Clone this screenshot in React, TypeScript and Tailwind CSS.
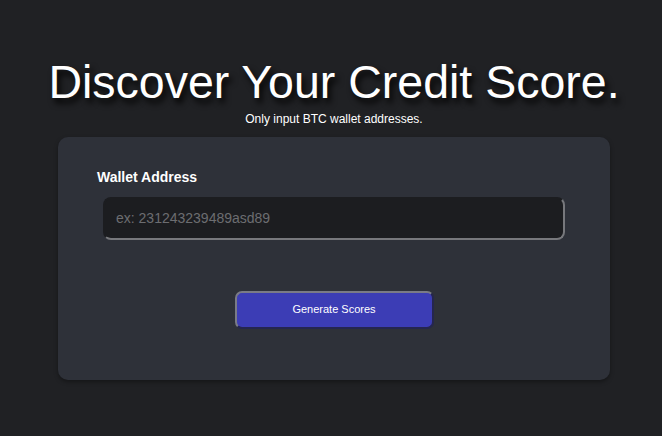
export default function App() {
  return (
    <div className="min-h-[436px] w-full bg-[#202124] font-['Liberation_Sans',Arial,sans-serif] text-white">
      <div className="flex flex-col items-center pl-[6px] pt-[59px]">
        {/* Heading */}
        <h1 className="text-[46.5px] leading-none font-normal [text-shadow:3px_5px_6px_rgba(0,0,0,0.95)]">
          Discover Your Credit Score.
        </h1>
        <p className="mt-[5px] text-[12px] leading-4">Only input BTC wallet addresses.</p>

        {/* Form card */}
        <div className="mt-[10px] w-[552px] rounded-[10px] bg-[#2e3139] px-[39px] pt-[30px] pb-[51px] shadow-[0_2px_4px_rgba(0,0,0,0.35)]">
          <label className="block text-[14px] leading-5 font-bold">Wallet Address</label>
          <input
            type="text"
            placeholder="ex: 231243239489asd89"
            className="mx-[6px] mt-[10px] block h-[43px] w-[462px] rounded-[8px] border-2 border-t-[#1c1d20] border-l-[#1c1d20] border-r-[#77787c] border-b-[#77787c] bg-[#1c1d20] px-[11px] text-[14px] text-white outline-none placeholder:text-[#6c6d71]"
          />
          <div className="mt-[51px] flex justify-center">
            <button className="h-[38px] w-[199px] rounded-[7px] border-2 border-t-[#7a7b86] border-l-[#7a7b86] border-r-[#25264f] border-b-[#25264f] bg-[#3c3db5] text-[11px] text-white">
              Generate Scores
            </button>
          </div>
        </div>
      </div>
    </div>
  );
}
